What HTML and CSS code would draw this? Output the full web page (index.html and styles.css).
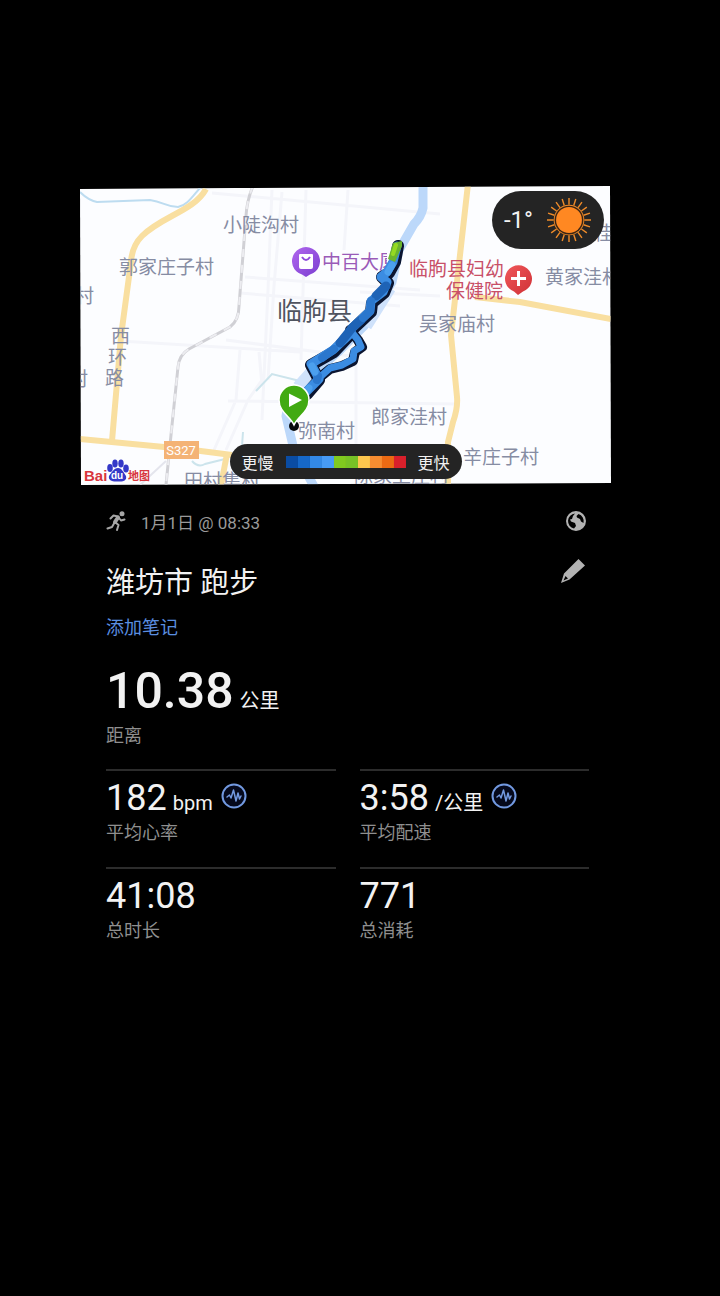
FILE: index.html
```html
<!DOCTYPE html>
<html lang="zh-CN">
<head>
<meta charset="utf-8">
<meta name="viewport" content="width=device-width, initial-scale=1">
<title>潍坊市 跑步</title>
<link rel="stylesheet" href="styles.css">
</head>
<body>
<main class="activity">
  <section class="map">
    <svg class="map-canvas" viewBox="80 186 531 299" role="img" aria-label="路线地图">
      <defs>
        <clipPath id="sheet"><path d="M80 189L235 188L610 186L611 483L81 485Z"/></clipPath>
        <linearGradient id="violet" x1="0" y1="0" x2="1" y2="1"><stop offset="0" stop-color="#b066ee"/><stop offset="1" stop-color="#7b3fd0"/></linearGradient>
        <linearGradient id="crimson" x1="0" y1="0" x2="1" y2="1"><stop offset="0" stop-color="#f0585a"/><stop offset="1" stop-color="#cf3036"/></linearGradient>
      </defs>
      <g clip-path="url(#sheet)" fill="none">
        <path fill="#fcfdff" d="M80 186h532v300H80z"/>
        <g stroke="#f4f5fa" stroke-width="3">
          <path d="M212 193L440 214M272 190L268 290L262 420M282 192L274 286L268 380M245 277L420 290M240 293L400 306M306 190L301 360M348 190L344 250M226 340L350 356M120 341L300 352M240 350L236 400L214 450M262 380L248 400M228 401L456 404M259 352L262 385M360 292L440 296M356 350V470M248 400L226 450"/>
        </g>
        <g stroke-width="2">
          <path stroke="#bddcf0" d="M80 192Q88 200 97 202L150 200C164 202 166 207 178 207C188 205 194 194 201 187"/>
          <path stroke="#cce4ec" d="M256 391L272 374L300 381M243 432L242 446M192 461Q198 468 205 464L225 459"/>
          <path stroke="#e4e5ed" d="M140 485L166 461"/>
        </g>
        <path stroke="#bcd8fa" stroke-width="9" stroke-linejoin="round" d="M423 184V208Q421 217 414 224L399 250L392 282L364 326L338 352L301 385Q287 402 286 416L294 450L316 490"/>
        <path stroke="#cfe2fb" stroke-width="12" stroke-linejoin="round" d="M390 288L366 326M298 387L316 367"/>
        <g stroke="#d0d0d5" stroke-width="3">
          <path d="M253 186Q247 200 246 216L239 306Q239 320 230 327L189 349Q179 355 178 367L171 435L166 485"/>
          <path stroke="#ececf0" stroke-width="2" stroke-dasharray="8 8" d="M253 186Q247 200 246 216L239 306Q239 320 230 327L189 349Q179 355 178 367L171 435L166 485"/>
        </g>
        <g stroke="#f9dfa0" stroke-width="6">
          <path d="M206 189C194 211 162 216 142 236Q132 246 131 262L121 336L112 441"/>
          <path d="M468 184L451 335L457 397Q458 408 453 422L448 442V490"/>
          <path d="M80 439L185 449L232 455M475 297L520 302L611 319"/>
          <path d="M227 454L220 490"/>
        </g>

        <g class="place">
          <text x="223" y="232">小陡沟村</text>
          <text x="119" y="274">郭家庄子村</text>
          <text x="75" y="303">村</text>
          <text x="69" y="386">村</text>
          <text x="545" y="284">黄家洼村</text>
          <text x="594" y="240">桂村</text>
          <text x="419" y="331">吴家庙村</text>
          <text x="371" y="424">郎家洼村</text>
          <text x="298" y="438">弥南村</text>
          <text x="463" y="464">辛庄子村</text>
          <text x="184" y="488">田村集村</text>
          <text x="354" y="483">陈家上庄村</text>
          <text x="111" y="343">西</text>
          <text x="108" y="364">环</text>
          <text x="105" y="385">路</text>
        </g>
        <text class="place-city" x="277" y="320">临朐县</text>
        <g class="place-hospital"><text x="409" y="276">临朐县妇幼</text><text x="446" y="298">保健院</text></g>
        <svg x="320" y="245" width="67" height="34" viewBox="320 245 67 34"><text class="place-mall" x="322" y="269">中百大厦</text></svg>

        <g stroke-linejoin="round" stroke-linecap="round">
          <g stroke="#0b1530" stroke-width="12">
            <path d="M398 246L395 262L389 273L382 277L388 283L384 293L372 303L371 312L353 329L349 336L334 352L311 365L319 380L307 394"/>
            <path stroke-width="10" d="M350 330L358 340L362 347L355 352L353 361L342 366L330 369L319 378"/>
          </g>
          <path fill="#0b1530" d="M385 280L391 285L392 268Z"/>
          <g stroke="#3b8ce2" stroke-width="9">
            <path d="M397 246L393 262L387 272L381 277L387 282L383 292L371 301L370 311L352 328L349 335L333 350L311 364L319 379L306 392"/>
            <path stroke-width="7" d="M350 330L358 340L361 347L354 351L353 359L342 365L330 368L319 378"/>
          </g>
          <path stroke="#1e63b6" stroke-width="9" d="M386 286L376 296M361 320L352 328L340 343"/>
          <path stroke="#2b77cd" stroke-width="8" d="M371 301L370 311L363 318M334 349L322 358M317 380L318 376"/>
          <path stroke="#4ca0ee" stroke-width="7" d="M392 265L388 272M312 366L315 372M309 388L307 391"/>
          <path fill="#6bb52e" d="M393 243L402 241L402 246L395 262L388 259Z"/>
          <path stroke="#95da22" stroke-width="4" d="M396 245L393 254"/>
        </g>

        <path fill="url(#violet)" d="M306 277L302 274.500A14 14 0 1 1 310 274.500Z"/>
        <path fill="#fff" d="M300 254h12q1 0 1 1v12q0 2-2 2h-10q-2 0-2-2v-12q0-1 1-1z"/>
        <path stroke="#8f4bdc" stroke-width="2" d="M302 257Q306 263 310 257"/>
        <path fill="url(#crimson)" d="M518 295L514 291.500A13.500 13.500 0 1 1 523 291.500Z"/>
        <path stroke="#fff" stroke-width="3" d="M518.500 271v15M511 278.500h15"/>

        <path fill="#f4b376" d="M164 441h35v18h-35z"/>
        <text class="road-sign" x="181" y="455">S327</text>

        <circle cx="294" cy="426" r="5" fill="#080a0c"/>
        <path fill="#42aa12" stroke="#fff" stroke-width="1.500" d="M294 425C290 416 279 412 279 400A15 15 0 0 1 309 400C309 412 298 416 294 425Z"/>
        <path fill="#fff" d="M289 393.500V407L302 400Z"/>

        <text class="brand" x="84" y="481">Bai</text>
        <g fill="#3438c8">
          <ellipse cx="110" cy="468" rx="2.800" ry="4"/><ellipse cx="115" cy="463.500" rx="2.700" ry="4"/><ellipse cx="121" cy="463.500" rx="2.700" ry="4"/><ellipse cx="126" cy="468.500" rx="2.800" ry="4"/>
          <path d="M118 468C122 468 124 473 126 476C127 480 124 482 118 481.500C112 482 108 480 109 476C111 473 114 468 118 468Z"/>
        </g>
        <text class="brand-du" x="117" y="479">du</text>
        <text class="brand-map" x="128" y="480">地图</text>
      </g>
    </svg>
    <div class="weather">
      <span>-1°</span>
      <svg class="sun" viewBox="-24 -24 48 48" aria-hidden="true">
        <g stroke="#ed8a29" stroke-width="1.500">
          <path id="r" d="M0-16V-23M0 16V23M-16 0H-23M16 0H23"/>
          <use href="#r" transform="rotate(18)"/><use href="#r" transform="rotate(36)"/><use href="#r" transform="rotate(54)"/><use href="#r" transform="rotate(72)"/>
        </g>
        <circle r="16" fill="#ed8a29"/><circle r="15" fill="#3a2414"/><circle r="13.500" fill="#ff8822"/>
      </svg>
    </div>
    <div class="legend">
      <span>更慢</span>
      <div class="scale"><i class="s1"></i><i class="s2"></i><i class="s3"></i><i class="s4"></i><i class="s5"></i><i class="s6"></i><i class="s7"></i><i class="s8"></i><i class="s9"></i><i class="s10"></i></div>
      <span>更快</span>
    </div>
  </section>

  <section class="details">
    <header class="meta">
      <svg class="runner" viewBox="0 0 20 20" aria-hidden="true">
        <circle cx="16" cy="2.800" r="2.500" fill="#a6a6a6"/>
        <g fill="none" stroke="#a6a6a6" stroke-linecap="round" stroke-linejoin="round"><path stroke-width="4" d="M12 6.500L9 11"/><path stroke-width="2" d="M12 5.500L7.500 4.500L4.500 7.500M13 7L15 9.500L18.500 8.500M9.500 11.500L12.500 14L11 19M8 12.500L6 16L1.500 17.500"/></g>
      </svg>
      <time>1月1日 @ 08:33</time>
      <button class="icon-button" aria-label="公开">
        <svg class="globe" viewBox="2 2 20 20"><path fill="#b2b2b2" fill-rule="evenodd" d="M12 2a10 10 0 1 0 0 20a10 10 0 0 0 0-20zM11 4.500L9 7L8 10L6 10.500L7 12.500L11 14L12 17L10 19.500A7.600 7.600 0 0 1 11 4.500ZM14.500 5A7.600 7.600 0 0 1 19.500 14L17 12.500L16 10L13 8.500L12.500 7Z"/></svg>
      </button>
    </header>
    <div class="heading">
      <h1>潍坊市 跑步</h1>
      <button class="icon-button" aria-label="编辑">
        <svg class="pencil" viewBox="0 0 26 26"><path fill="#b2b2b2" fill-rule="evenodd" d="M18.500 1L25 7.500L9.500 21.500L1 25L4 15.500ZM5.500 18L3.500 22.500L8 20.500Z"/></svg>
      </button>
    </div>
    <a class="note" href="#note">添加笔记</a>
    <div class="distance">
      <p class="value value-large">10.38 <small>公里</small></p>
      <p class="label">距离</p>
    </div>
    <div class="stats">
      <div class="stat">
        <p class="value">182 <small>bpm</small>
          <svg class="pulse" viewBox="0 0 26 26" aria-hidden="true"><circle cx="13" cy="13" r="11.500"/><path d="M6 14L8.500 12L10 15L12.500 7L15 18L17 10L18.500 16L20 13"/></svg></p>
        <p class="label">平均心率</p>
      </div>
      <div class="stat">
        <p class="value">3:58 <small>/公里</small>
          <svg class="pulse" viewBox="0 0 26 26" aria-hidden="true"><circle cx="13" cy="13" r="11.500"/><path d="M6 14L8.500 12L10 15L12.500 7L15 18L17 10L18.500 16L20 13"/></svg></p>
        <p class="label">平均配速</p>
      </div>
      <div class="stat"><p class="value">41:08</p><p class="label">总时长</p></div>
      <div class="stat"><p class="value">771</p><p class="label">总消耗</p></div>
    </div>
  </section>
</main>
</body>
</html>
```
FILE: styles.css
```css
* { box-sizing: border-box; }
body {
  margin: 0;
  background: #000;
  color: #f2f2f2;
  font-family: Roboto, "Noto Sans CJK SC", sans-serif;
}
h1, p { margin: 0; font-weight: 400; }
.activity { padding: 186px 109px 48px 80px; }

.map { position: relative; }
.map-canvas { display: block; width: 100%; height: auto; }
.place { fill: #868ca3; font-size: 19px; }
.place-city { fill: #50545f; font-size: 25px; }
.place-hospital { fill: #c85068; font-size: 19px; }
.place-mall { fill: #9a5bb8; font-size: 19px; }
.road-sign { fill: #fff; font-size: 13px; text-anchor: middle; }
.brand { fill: #d8353c; font: 700 15px "Liberation Sans", sans-serif; }
.brand-du { fill: #fff; font: 700 10px "Liberation Sans", sans-serif; text-anchor: middle; }
.brand-map { fill: #d8353c; font-size: 11px; font-weight: 700; }

.weather, .legend {
  position: absolute;
  display: flex;
  align-items: center;
  justify-content: space-between;
  background: #242424;
  border-radius: 30px;
  white-space: nowrap;
}
.weather { top: 5px; right: 7px; height: 58px; padding: 0 12px; gap: 13px; font-size: 24px; }
.sun { width: 46px; height: 46px; }
.legend { left: 50%; bottom: 6px; transform: translateX(-50%); height: 35px; padding: 0 12px; gap: 12px; font-size: 16px; }
.scale { display: flex; }
.scale i { width: 12px; height: 12px; }
.s1 { background: #0a4ca3; }
.s2 { background: #1668c8; }
.s3 { background: #3389e6; }
.s4 { background: #479bf5; }
.s5 { background: #80c91f; }
.s6 { background: #77c126; }
.s7 { background: #fcc64e; }
.s8 { background: #f68d31; }
.s9 { background: #eb6a13; }
.s10 { background: #d8202b; }

.details { padding: 20px 22px 0 26px; }
.meta { display: flex; align-items: center; height: 32px; color: #9a9a9a; font-size: 17px; }
.runner { width: 20px; height: 20px; margin-right: 15px; }
.icon-button { margin-left: auto; padding: 0; border: 0; background: none; line-height: 0; }
.globe { width: 20px; height: 20px; margin-right: 3px; }
.pencil { width: 26px; height: 26px; margin-right: 3px; }
.heading { display: flex; align-items: flex-start; margin-top: 21px; }
h1 { font-size: 29px; line-height: 50px; }
.note { display: block; width: max-content; margin-top: 7px; color: #5b8fe0; font-size: 18px; line-height: 26px; text-decoration: none; }
.distance { margin-top: 18px; }
.value { display: flex; align-items: baseline; gap: 6px; height: 44px; font-size: 36px; line-height: 44px; }
.value small { font-size: 20px; }
.value-large { height: 64px; font-size: 50px; font-weight: 500; line-height: 64px; }
.value-large small { font-weight: 400; }
.label { color: #8f8f8f; font-size: 18px; line-height: 26px; }
.stats { display: grid; grid-template-columns: 1fr 1fr; column-gap: 24px; margin-top: 20px; }
.stat { height: 98px; padding-top: 5px; border-top: 2px solid #2c2c2c; }
.pulse { width: 26px; height: 26px; margin: 0 0 4px 2px; align-self: center; fill: #05091c; stroke: #7299e0; stroke-width: 2; }
.pulse path { fill: none; stroke-width: 1.5; stroke-linejoin: round; stroke-linecap: round; }
```
